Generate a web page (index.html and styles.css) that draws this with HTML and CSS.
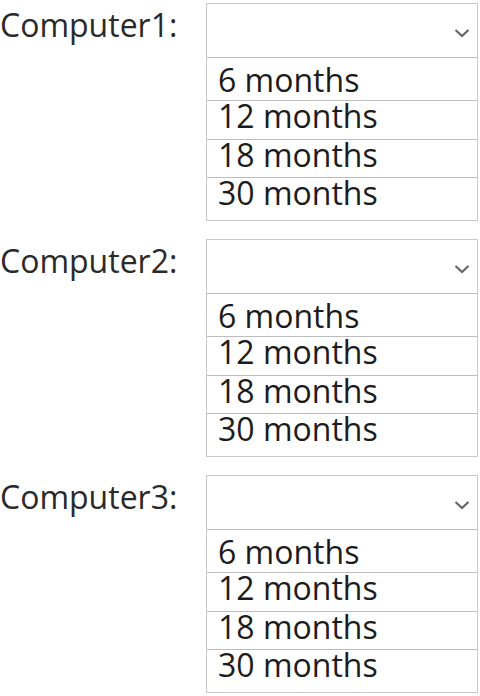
FILE: index.html
```html
<!DOCTYPE html>
<html lang="en">
<head>
<meta charset="utf-8">
<title>Computers</title>
<link rel="stylesheet" href="styles.css">
</head>
<body>
<div class="page">
  <div class="block">
    <div class="label">Computer1:</div>
    <div class="select">
      <div class="head"><svg class="chev" width="16" height="10" viewBox="0 0 16 10"><path d="M1.5 2 L8 8 L14.5 2" fill="none" stroke="#666" stroke-width="2.2"/></svg></div>
      <div class="opt first">6 months</div>
      <div class="opt mid2">12 months</div>
      <div class="opt">18 months</div>
      <div class="opt last">30 months</div>
    </div>
  </div>
  <div class="block">
    <div class="label">Computer2:</div>
    <div class="select">
      <div class="head"><svg class="chev" width="16" height="10" viewBox="0 0 16 10"><path d="M1.5 2 L8 8 L14.5 2" fill="none" stroke="#666" stroke-width="2.2"/></svg></div>
      <div class="opt first">6 months</div>
      <div class="opt mid2">12 months</div>
      <div class="opt">18 months</div>
      <div class="opt last">30 months</div>
    </div>
  </div>
  <div class="block">
    <div class="label">Computer3:</div>
    <div class="select">
      <div class="head"><svg class="chev" width="16" height="10" viewBox="0 0 16 10"><path d="M1.5 2 L8 8 L14.5 2" fill="none" stroke="#666" stroke-width="2.2"/></svg></div>
      <div class="opt first">6 months</div>
      <div class="opt mid2">12 months</div>
      <div class="opt">18 months</div>
      <div class="opt last">30 months</div>
    </div>
  </div>
</div>
</body>
</html>
```
FILE: styles.css
```css
html, body {
  margin: 0;
  padding: 0;
  background: #ffffff;
}
.page {
  display: flex;
  flex-direction: column;
  gap: 18px;
  padding-top: 3px;
  font-family: "Open Sans", "Noto Sans", sans-serif;
  color: #1c1c1c;
}
.block {
  display: flex;
  align-items: flex-start;
}
.label {
  width: 206px;
  font-size: 32px;
  line-height: 30px;
  padding-top: 7px;
  color: #2a2a2a;
  white-space: nowrap;
}
.select {
  width: 270px;
  border: 1px solid #c9c9c9;
  display: flex;
  flex-direction: column;
}
.head {
  height: 53px;
  border-bottom: 1px solid #bdbdbd;
  display: flex;
  justify-content: flex-end;
  align-items: flex-start;
}
.chev {
  margin-top: 24px;
  margin-right: 7px;
}
.opt {
  font-size: 32px;
  line-height: 30px;
  padding: 0 0 7px 11px;
  border-bottom: 1px solid #bdbdbd;
  white-space: nowrap;
}
.opt.first {
  padding-top: 7px;
  padding-bottom: 5px;
}
.opt.mid2 {
  padding-bottom: 8px;
}
.opt.last {
  border-bottom: none;
  padding-bottom: 12px;
}
```
